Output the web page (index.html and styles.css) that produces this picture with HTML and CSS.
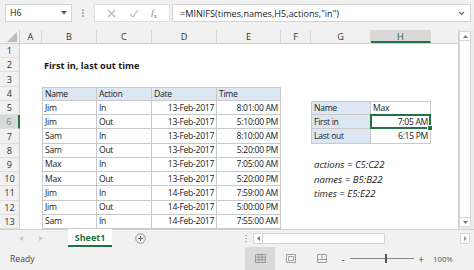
FILE: index.html
```html
<!DOCTYPE html>
<html>
<head>
<meta charset="utf-8">
<link rel="stylesheet" href="styles.css">
</head>
<body>
<div class="app">
  <div class="fbar">
    <div class="namebox"><span>H6</span><svg class="caret" width="6" height="4" viewBox="0 0 6 4"><path d="M0 0H6L3 3.5Z" fill="#555"/></svg></div>
    <div class="vdots"><i></i><i></i><i></i></div>
    <div class="fbtns">
      <svg width="9" height="9" viewBox="0 0 9 9"><path d="M1 1L8 8M8 1L1 8" stroke="#b8b8b8" stroke-width="1.1"/></svg>
      <svg width="10" height="9" viewBox="0 0 10 9"><path d="M1 5L4 8L9 1" stroke="#b8b8b8" stroke-width="1.1" fill="none"/></svg>
      <span class="fx"><i>f</i><sub>x</sub></span>
    </div>
    <div class="formula"><span>=MINIFS(times,names,H5,actions,"in")</span><svg width="7" height="5" viewBox="0 0 7 5"><path d="M1 1L3.5 3.5L6 1" stroke="#666" stroke-width="1.1" fill="none"/></svg></div>
  </div>
  <div class="main">
    <div class="sheet">
      <div class="row hdr">
        <div class="corner"><svg width="10" height="10" viewBox="0 0 10 10"><path d="M10 0V10H0Z" fill="#bcbcbc"/></svg></div>
        <div class="ch wA">A</div><div class="ch wB">B</div><div class="ch wC">C</div><div class="ch wD">D</div><div class="ch wE">E</div><div class="ch wF">F</div><div class="ch wG">G</div><div class="ch wH sel">H</div><div class="ch wI"></div>
      </div>
      <div class="row"><div class="rh">1</div></div>
      <div class="row"><div class="rh">2</div><div class="c wA"></div><div class="c wB title">First in, last out time</div></div>
      <div class="row"><div class="rh">3</div></div>
      <div class="row"><div class="rh">4</div><div class="c wA"></div><div class="c wB t tl tt th">Name</div><div class="c wC t tt th">Action</div><div class="c wD t tt th">Date</div><div class="c wE t tt th">Time</div></div>
      <div class="row"><div class="rh">5</div><div class="c wA"></div><div class="c wB t tl">Jim</div><div class="c wC t">In</div><div class="c wD t r">13-Feb-2017</div><div class="c wE t r">8:01:00 AM</div><div class="c wF"></div><div class="c wG t tl tt th">Name</div><div class="c wH t tt">Max</div></div>
      <div class="row"><div class="rh selr">6</div><div class="c wA"></div><div class="c wB t tl">Jim</div><div class="c wC t">Out</div><div class="c wD t r">13-Feb-2017</div><div class="c wE t r">5:10:00 PM</div><div class="c wF"></div><div class="c wG t tl th">First in</div><div class="c wH t r active">7:05 AM</div></div>
      <div class="row"><div class="rh">7</div><div class="c wA"></div><div class="c wB t tl">Sam</div><div class="c wC t">In</div><div class="c wD t r">13-Feb-2017</div><div class="c wE t r">8:10:00 AM</div><div class="c wF"></div><div class="c wG t tl th">Last out</div><div class="c wH t r">6:15 PM</div></div>
      <div class="row"><div class="rh">8</div><div class="c wA"></div><div class="c wB t tl">Sam</div><div class="c wC t">Out</div><div class="c wD t r">13-Feb-2017</div><div class="c wE t r">5:20:00 PM</div></div>
      <div class="row"><div class="rh">9</div><div class="c wA"></div><div class="c wB t tl">Max</div><div class="c wC t">In</div><div class="c wD t r">13-Feb-2017</div><div class="c wE t r">7:05:00 AM</div><div class="c wF"></div><div class="c note">actions = C5:C22</div></div>
      <div class="row"><div class="rh">10</div><div class="c wA"></div><div class="c wB t tl">Max</div><div class="c wC t">Out</div><div class="c wD t r">13-Feb-2017</div><div class="c wE t r">5:20:00 PM</div><div class="c wF"></div><div class="c note">names = B5:B22</div></div>
      <div class="row"><div class="rh">11</div><div class="c wA"></div><div class="c wB t tl">Jim</div><div class="c wC t">In</div><div class="c wD t r">14-Feb-2017</div><div class="c wE t r">7:59:00 AM</div><div class="c wF"></div><div class="c note">times = E5:E22</div></div>
      <div class="row"><div class="rh">12</div><div class="c wA"></div><div class="c wB t tl">Jim</div><div class="c wC t">Out</div><div class="c wD t r">14-Feb-2017</div><div class="c wE t r">5:00:00 PM</div></div>
      <div class="row"><div class="rh">13</div><div class="c wA"></div><div class="c wB t tl">Sam</div><div class="c wC t">In</div><div class="c wD t r">14-Feb-2017</div><div class="c wE t r">7:55:00 AM</div></div>
    </div>
    <div class="vscroll">
      <div class="vbtn"><svg width="5" height="3" viewBox="0 0 5 3"><path d="M0 3H5L2.5 0Z" fill="#777"/></svg></div>
      <div class="vtrack"></div>
      <div class="vbtn"><svg width="5" height="3" viewBox="0 0 5 3"><path d="M0 0H5L2.5 3Z" fill="#777"/></svg></div>
    </div>
  </div>
  <div class="tabs">
    <div class="nav"><svg width="4" height="5" viewBox="0 0 4 5"><path d="M4 0V5L0 2.5Z" fill="#c8c8c8"/></svg><svg width="4" height="5" viewBox="0 0 4 5"><path d="M0 0V5L4 2.5Z" fill="#c8c8c8"/></svg></div>
    <div class="tab">Sheet1</div>
    <div class="add"><svg width="11" height="11" viewBox="0 0 11 11"><circle cx="5.5" cy="5.5" r="4.8" fill="none" stroke="#8a8a8a" stroke-width="0.9"/><path d="M5.5 3V8M3 5.5H8" stroke="#6a6a6a" stroke-width="1"/></svg></div>
    <div class="tabfill"></div>
    <div class="hdots"><i></i><i></i><i></i></div>
    <div class="hscroll">
      <div class="hbtn"><svg width="3" height="5" viewBox="0 0 3 5"><path d="M3 0V5L0 2.5Z" fill="#777"/></svg></div>
      <div class="hthumb"></div>
      <div class="hrest"></div>
      <div class="hbtn"><svg width="3" height="5" viewBox="0 0 3 5"><path d="M0 0V5L3 2.5Z" fill="#999"/></svg></div>
    </div>
  </div>
  <div class="status">
    <span class="ready">Ready</span>
    <div class="views">
      <div class="vw on"><svg width="11" height="9" viewBox="0 0 11 9"><path d="M0.5 0.5H10.5V8.5H0.5ZM0.5 3.2H10.5M0.5 5.8H10.5M3.8 0.5V8.5M7.2 0.5V8.5" fill="none" stroke="#8a8a8a" stroke-width="0.8"/></svg></div>
      <div class="vw"><svg width="10" height="9" viewBox="0 0 10 9"><path d="M0.5 0.5H9.5V8.5H0.5Z M2.5 2.5H7.5V6.5H2.5Z" fill="none" stroke="#8a8a8a" stroke-width="0.8"/></svg></div>
      <div class="vw"><svg width="10" height="9" viewBox="0 0 10 9"><path d="M0.5 0.5H9.5V8.5H0.5Z M5 0.5V5.5M0.5 5.5H9.5" fill="none" stroke="#8a8a8a" stroke-width="0.8"/></svg></div>
    </div>
    <div class="zoom">
      <span class="zm">-</span>
      <div class="zline"><i></i></div>
      <span class="zp">+</span>
    </div>
    <span class="pct">100%</span>
  </div>
</div>
</body>
</html>
```
FILE: styles.css
```css
* { box-sizing: border-box; margin: 0; padding: 0; }
html, body { width: 474px; height: 270px; overflow: hidden; background: #fff; }
body { font-family: "Open Sans", "Noto Sans", sans-serif; font-size: 8.4px; color: #1a1a1a; }
.app { display: flex; flex-direction: column; width: 474px; height: 270px; }

.fbar { height: 30px; background: #f1f1f1; display: flex; align-items: flex-start; padding-top: 4px; }
.namebox { margin-left: 5px; width: 67px; height: 18px; background: #fff; border: 1px solid #d4d4d4; display: flex; align-items: center; justify-content: space-between; padding: 0 4px 0 4px; font-size: 8.8px; color: #222; }
.vdots { width: 22px; height: 18px; display: flex; flex-direction: column; align-items: center; justify-content: center; gap: 1.5px; }
.vdots i { width: 1.5px; height: 1.5px; background: #b0b0b0; display: block; }
.fbtns { width: 76px; height: 18px; background: #fff; border: 1px solid #e0e0e0; display: flex; align-items: center; justify-content: space-around; padding: 0 6px; }
.fx { font-family: "Liberation Serif", serif; font-size: 9px; color: #777; }
.fx sub { font-size: 6px; font-family: "Liberation Serif", serif; font-style: normal; }
.formula { margin-left: 2px; width: 299px; height: 18px; background: #fff; border: 1px solid #d4d4d4; display: flex; align-items: center; justify-content: space-between; padding: 0 5px 0 7px; font-size: 9.1px; color: #222; }

.main { display: flex; height: 199px; }
.sheet { width: 458px; display: flex; flex-direction: column; }
.row { display: flex; height: 14.25px; }
.row.hdr { height: 14px; background: #f1f1f1; border-bottom: 1px solid #d0d0d0; }
.corner { width: 20px; display: flex; align-items: flex-end; justify-content: flex-end; padding: 0 2px 1px 0; border-right: 1px solid #d0d0d0; }
.ch { display: flex; align-items: center; justify-content: center; border-right: 1px solid #d8d8d8; color: #333; font-size: 9.2px; }
.ch.sel { background: #d9d9d9; border-bottom: 2px solid #217346; color: #1e5d3a; padding-top: 2px; }
.ch.wI { border-right: none; }
.rh { width: 20px; flex: none; background: #f1f1f1; border-right: 1px solid #d0d0d0; border-bottom: 1px solid #dedede; display: flex; align-items: center; justify-content: center; color: #333; font-size: 9.2px; }
.rh.selr { background: #d9d9d9; border-right: 2px solid #217346; color: #6f8f7a; }

.wA { width: 22px; flex: none; }
.wB { width: 55px; flex: none; }
.wC { width: 55px; flex: none; }
.wD { width: 65px; flex: none; }
.wE { width: 64px; flex: none; }
.wF { width: 30px; flex: none; }
.wG { width: 60px; flex: none; }
.wH { width: 60px; flex: none; }
.wI { width: 27px; flex: none; }

.c { display: flex; align-items: center; padding: 0 2px; white-space: nowrap; }
.c.r { justify-content: flex-end; }
.t { border-right: 1px solid #c9c9c9; border-bottom: 1px solid #c9c9c9; letter-spacing: -0.3px; font-size: 8.6px; }
.tl { border-left: 1px solid #c9c9c9; }
.tt { border-top: 1px solid #c9c9c9; }
.th { background: #dde7f3; }
.title { font-weight: bold; overflow: visible; font-size: 9.2px; }
.note { font-style: italic; padding-left: 3px; font-size: 9.6px; }
.active { position: relative; }
.active::after { content: ""; position: absolute; left: -1px; top: -1px; right: -1px; bottom: -1px; border: 2px solid #217346; }
.active::before { content: ""; position: absolute; right: -3px; bottom: -3px; width: 4px; height: 4px; background: #217346; border: 1px solid #fff; z-index: 1; }

.vscroll { width: 16px; background: #ececec; display: flex; flex-direction: column; padding: 1px 3px 2px 0; border-left: 1px solid #d0d0d0; }
.vbtn { height: 10px; background: #fff; border: 1px solid #d6d6d6; display: flex; align-items: center; justify-content: center; }
.vtrack { flex: 1; background: #fff; border-left: 1px solid #d6d6d6; border-right: 1px solid #d6d6d6; }

.tabs { height: 18px; background: #f1f1f1; display: flex; align-items: stretch; border-top: 1px solid #d0d0d0; }
.nav { width: 68px; display: flex; align-items: center; gap: 16px; padding-left: 19px; }
.tab { width: 44px; background: #fff; color: #217346; font-weight: bold; font-size: 9px; display: flex; align-items: center; justify-content: center; border-bottom: 2px solid #217346; margin-top: -1px; }
.add { width: 56px; display: flex; align-items: center; justify-content: center; }
.tabfill { flex: 1; }
.hdots { width: 10px; display: flex; flex-direction: column; align-items: center; justify-content: center; gap: 1.5px; }
.hdots i { width: 1.5px; height: 1.5px; background: #b0b0b0; display: block; }
.hscroll { width: 223px; display: flex; align-items: center; padding: 0 4px 0 2px; }
.hbtn { width: 10px; height: 11px; background: #fff; border: 1px solid #d6d6d6; display: flex; align-items: center; justify-content: center; }
.hthumb { width: 122px; height: 11px; background: #fff; border: 1px solid #d6d6d6; border-left: none; }
.hrest { flex: 1; height: 11px; }

.status { height: 23px; background: #f1f1f1; display: flex; align-items: center; color: #444; font-size: 8.6px; }
.ready { padding-left: 10px; width: 245px; }
.views { display: flex; height: 23px; }
.vw { width: 31px; display: flex; align-items: center; justify-content: center; }
.vw.on { background: #dadada; width: 30px; }
.zoom { display: flex; align-items: center; margin-left: 2px; width: 86px; }
.zm, .zp { color: #444; font-size: 10px; width: 8px; text-align: center; }
.zline { flex: 1; height: 1px; background: #888; position: relative; margin: 0 3px; }
.zline i { position: absolute; left: 35px; top: -4px; width: 2px; height: 9px; background: #555; }
.pct { margin-left: 8px; font-size: 7.8px; color: #555; }
```
